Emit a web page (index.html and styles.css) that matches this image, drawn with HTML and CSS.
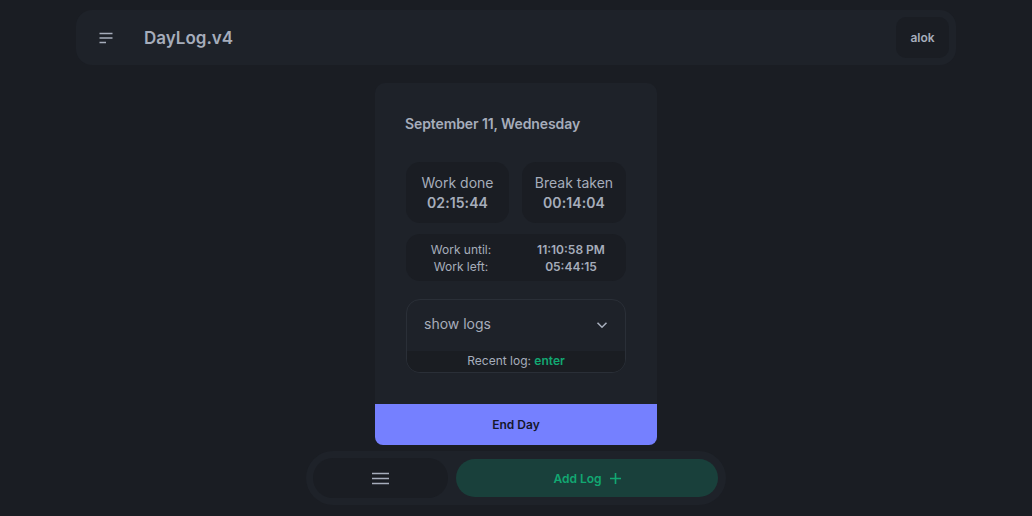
FILE: index.html
```html
<!DOCTYPE html>
<html lang="en">
<head>
<meta charset="utf-8">
<title>DayLog.v4</title>
<link rel="stylesheet" href="styles.css">
</head>
<body>
<div class="page">
  <header class="topbar">
    <div class="brand">
      <button class="icon-btn" aria-label="menu">
        <svg width="14" height="12" viewBox="0 0 14 12"><path d="M0.5 1.5H13.5M0.5 6H13.5M0.5 10.5H7" stroke="#a6adbb" stroke-width="1.5" fill="none"/></svg>
      </button>
      <span class="title">DayLog.v4</span>
    </div>
    <button class="user-btn">alok</button>
  </header>

  <main class="card">
    <div class="card-body">
      <div class="date">September 11, Wednesday</div>
      <div class="stats">
        <div class="stat">
          <div class="stat-label">Work done</div>
          <div class="stat-value">02:15:44</div>
        </div>
        <div class="stat">
          <div class="stat-label">Break taken</div>
          <div class="stat-value">00:14:04</div>
        </div>
      </div>
      <div class="until">
        <div class="until-col">
          <div>Work until:</div>
          <div>Work left:</div>
        </div>
        <div class="until-col strong">
          <div>11:10:58 PM</div>
          <div>05:44:15</div>
        </div>
      </div>
      <div class="logs">
        <div class="logs-head">
          <span>show logs</span>
          <svg width="12" height="8" viewBox="0 0 12 8"><path d="M1.5 1.8L6 6.2L10.5 1.8" stroke="#a6adbb" stroke-width="1.6" fill="none"/></svg>
        </div>
        <div class="logs-recent">Recent log: <span class="green">enter</span></div>
      </div>
    </div>
    <button class="end-day">End Day</button>
  </main>
</div>

<nav class="dock">
  <button class="dock-menu" aria-label="menu">
    <svg width="17" height="13" viewBox="0 0 17 13"><path d="M0 1.5H17M0 6.5H17M0 11.5H17" stroke="#a6adbb" stroke-width="1.5" fill="none"/></svg>
  </button>
  <button class="dock-add">Add Log
    <svg width="11" height="11" viewBox="0 0 11 11"><path d="M5.5 0V11M0 5.5H11" stroke="#12a872" stroke-width="1.6" fill="none"/></svg>
  </button>
</nav>
</body>
</html>
```

FILE: styles.css
```css
* { box-sizing: border-box; }
html, body { margin: 0; padding: 0; }
body {
  background: #1a1d23;
  font-family: Inter, "Noto Sans", sans-serif;
  color: #a6adbb;
  height: 516px;
  overflow: hidden;
}
button {
  font-family: inherit;
  border: none;
  cursor: pointer;
}
.page {
  display: flex;
  flex-direction: column;
  align-items: center;
  padding-top: 10px;
}
.topbar {
  width: 880px;
  height: 55px;
  background: #1e2229;
  border-radius: 16px;
  display: flex;
  align-items: center;
  justify-content: space-between;
  padding: 0 7px 0 23px;
}
.brand {
  display: flex;
  align-items: center;
  gap: 31px;
}
.icon-btn {
  background: none;
  padding: 0;
  width: 14px;
  height: 12px;
  display: flex;
}
.title {
  font-size: 17px;
  font-weight: 600;
  color: #a6adbb;
}
.user-btn {
  width: 53px;
  height: 41px;
  background: #1a1d23;
  border-radius: 10px;
  color: #a6adbb;
  font-size: 12px;
  font-weight: 600;
}
.card {
  margin-top: 18px;
  width: 282px;
  background: #1e2229;
  border-radius: 10px;
  display: flex;
  flex-direction: column;
}
.card-body {
  padding: 31px 31px 31px 31px;
  display: flex;
  flex-direction: column;
}
.date {
  font-size: 14px;
  font-weight: 600;
  line-height: 20px;
  margin-left: -1px;
  letter-spacing: -0.1px;
}
.stats {
  margin-top: 28px;
  display: grid;
  grid-template-columns: 103px 104px;
  gap: 13px;
}
.stat {
  background: #1a1d23;
  border-radius: 14px;
  height: 61px;
  display: flex;
  flex-direction: column;
  align-items: center;
  justify-content: center;
  font-size: 14px;
  line-height: 20px;
}
.stat-value {
  font-weight: 600;
  letter-spacing: 0.1px;
}
.until {
  margin-top: 11px;
  height: 47px;
  background: #1a1d23;
  border-radius: 14px;
  display: grid;
  grid-template-columns: 1fr 1fr;
  align-items: center;
  font-size: 12px;
  line-height: 17px;
  text-align: center;
}
.until-col.strong { font-weight: 600; }
.logs {
  margin-top: 18px;
  border: 1px solid #2a2f37;
  border-radius: 14px;
  overflow: hidden;
}
.logs-head {
  height: 51px;
  display: flex;
  align-items: center;
  justify-content: space-between;
  padding: 0 17px 4px 17px;
  font-size: 14px;
}
.logs-head svg { margin-top: 2px; }
.logs-recent {
  height: 21px;
  background: #1a1d22;
  text-align: center;
  font-size: 12px;
  line-height: 19px;
}
.green {
  color: #12a872;
  font-weight: 600;
}
.end-day {
  height: 41px;
  width: 100%;
  background: #7580ff;
  color: #15172a;
  font-size: 12px;
  font-weight: 600;
  border-radius: 0 0 8px 8px;
}
.dock {
  position: fixed;
  left: 306px;
  bottom: 11px;
  width: 420px;
  height: 54px;
  background: #1e2229;
  border-radius: 27px;
  display: flex;
  align-items: center;
  padding: 0 8px 0 7px;
  gap: 8px;
}
.dock-menu {
  width: 135px;
  height: 40px;
  border-radius: 20px;
  background: #1a1d23;
  display: flex;
  align-items: center;
  justify-content: center;
}
.dock-add {
  flex: 1;
  height: 38px;
  border-radius: 19px;
  background: #19403b;
  color: #12a872;
  font-size: 12px;
  font-weight: 600;
  display: flex;
  align-items: center;
  justify-content: center;
  gap: 8px;
}
```
